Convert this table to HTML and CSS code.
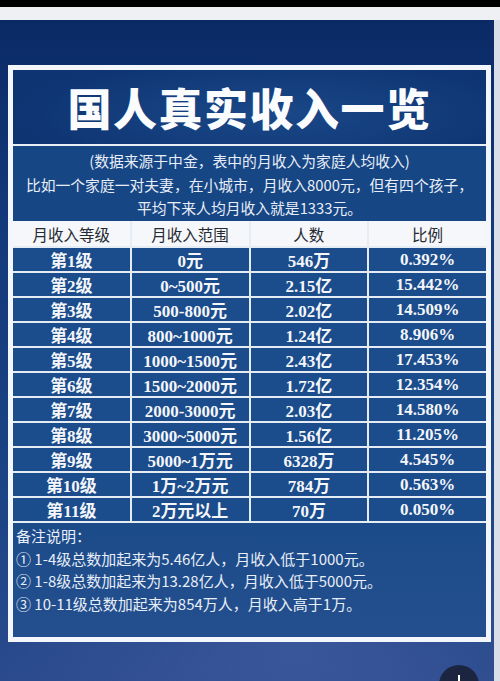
FILE: index.html
```html
<!DOCTYPE html>
<html lang="zh">
<head>
<meta charset="utf-8">
<link rel="stylesheet" href="styles.css">
</head>
<body>
<div class="topbar"></div>
<div class="poster">
  <div class="frame">
    <div class="title">国人真实收入一览</div>
    <div class="divider"></div>
    <div class="desc">
      <p>(数据来源于中金，表中的月收入为家庭人均收入)</p>
      <p>比如一个家庭一对夫妻，在小城市，月收入8000元，但有四个孩子，</p>
      <p>平均下来人均月收入就是1333元。</p>
    </div>
    <div class="table">
      <div class="th">月收入等级</div><div class="th">月收入范围</div><div class="th">人数</div><div class="th">比例</div>
      <div class="td">第1级</div><div class="td">0元</div><div class="td">546万</div><div class="td">0.392%</div>
      <div class="td">第2级</div><div class="td">0~500元</div><div class="td">2.15亿</div><div class="td">15.442%</div>
      <div class="td">第3级</div><div class="td">500-800元</div><div class="td">2.02亿</div><div class="td">14.509%</div>
      <div class="td">第4级</div><div class="td">800~1000元</div><div class="td">1.24亿</div><div class="td">8.906%</div>
      <div class="td">第5级</div><div class="td">1000~1500元</div><div class="td">2.43亿</div><div class="td">17.453%</div>
      <div class="td">第6级</div><div class="td">1500~2000元</div><div class="td">1.72亿</div><div class="td">12.354%</div>
      <div class="td">第7级</div><div class="td">2000-3000元</div><div class="td">2.03亿</div><div class="td">14.580%</div>
      <div class="td">第8级</div><div class="td">3000~5000元</div><div class="td">1.56亿</div><div class="td">11.205%</div>
      <div class="td">第9级</div><div class="td">5000~1万元</div><div class="td">6328万</div><div class="td">4.545%</div>
      <div class="td">第10级</div><div class="td">1万~2万元</div><div class="td">784万</div><div class="td">0.563%</div>
      <div class="td">第11级</div><div class="td">2万元以上</div><div class="td">70万</div><div class="td">0.050%</div>
    </div>
    <div class="notes">
      <p>备注说明：</p>
      <p>① 1-4级总数加起来为5.46亿人，月收入低于1000元。</p>
      <p>② 1-8级总数加起来为13.28亿人，月收入低于5000元。</p>
      <p>③ 10-11级总数加起来为854万人，月收入高于1万。</p>
    </div>
  </div>
  <div class="fab"></div>
</div>
</body>
</html>
```
FILE: styles.css
```css
html, body {
  margin: 0;
  padding: 0;
}
body {
  background: #eef0f3;
  width: 500px;
  height: 681px;
  overflow: hidden;
  font-family: "Noto Sans CJK SC", "Noto Sans", sans-serif;
}
p { margin: 0; }
.topbar {
  height: 7px;
  background: #000;
}
.poster {
  position: relative;
  margin-top: 13px;
  width: 494px;
  height: 661px;
  box-sizing: border-box;
  padding: 45px 0 0 8px;
  background:
    radial-gradient(ellipse 300px 200px at 60% 95%, rgba(90,110,180,0.35), rgba(0,0,0,0)),
    linear-gradient(180deg, #0a2a65 0%, #12397a 30%, #1a4484 70%, #2a4a8c 100%);
  box-shadow: 6px 0 0 #d9dee8;
}
.frame {
  width: 483px;
  box-sizing: border-box;
  border: 5px solid #f3f6fa;
  background: #174684;
}
.title {
  height: 74px;
  display: flex;
  align-items: center;
  justify-content: center;
  color: #fbfcfe;
  font-size: 44px;
  font-weight: 900;
  letter-spacing: 1.5px;
  background: radial-gradient(ellipse 260px 60px at 55% 60%, #1a4888, #0e3472);
}
.divider {
  height: 2px;
  background: #e9eef5;
}
.desc {
  height: 75px;
  box-sizing: border-box;
  padding-top: 3px;
  color: #e8eef7;
  font-size: 14.8px;
  line-height: 23.5px;
  text-align: center;
  background: #174685;
}
.table {
  display: grid;
  grid-template-columns: repeat(4, 1fr);
  column-gap: 2px;
  row-gap: 2px;
  background: #e6ecf4;
  padding-bottom: 2px;
}
.th {
  height: 25px;
  display: flex;
  align-items: center;
  justify-content: center;
  color: #262a33;
  font-size: 15.5px;
  background: #f5f7fa;
}
.td {
  height: 23px;
  display: flex;
  align-items: center;
  justify-content: center;
  background: #1b4c8b;
  color: #f4f6fa;
  font-family: "Liberation Serif", "Noto Sans CJK SC", serif;
  font-weight: 700;
  font-size: 17px;
}
.notes {
  height: 114px;
  box-sizing: border-box;
  padding: 2px 0 0 3px;
  color: #e8eef7;
  font-size: 15px;
  line-height: 22.7px;
  background: linear-gradient(180deg, #1c4b89, #244f8f);
}
.fab {
  position: absolute;
  left: 439px;
  top: 645px;
  width: 40px;
  height: 40px;
  border-radius: 50%;
  background: #1b2540;
}
.fab::before {
  content: "";
  position: absolute;
  left: 19px;
  top: 10px;
  width: 2px;
  height: 20px;
  background: #ffffff;
}
```
